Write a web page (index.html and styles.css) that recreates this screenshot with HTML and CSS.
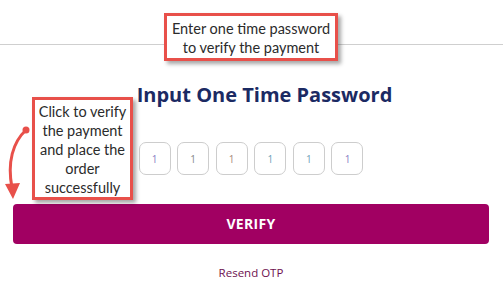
FILE: index.html
```html
<!DOCTYPE html>
<html lang="en">
<head>
    <meta charset="UTF-8">
    <meta name="viewport" content="width=device-width, initial-scale=1.0">
    <title>Verify Payment</title>
    <link rel="stylesheet" href="styles.css">
</head>
<body>
    <div class="page">
        <div class="divider"></div>
        <h2 class="title">Input One Time Password</h2>
        <div class="otp">
            <div class="digit d1">1</div>
            <div class="digit d2">1</div>
            <div class="digit d3">1</div>
            <div class="digit d4">1</div>
            <div class="digit d5">1</div>
            <div class="digit d6">1</div>
        </div>
        <a href="#" class="verify">VERIFY</a>
        <div class="resend"><a href="#">Resend OTP</a></div>

        <!-- annotations -->
        <div class="note note-top">Enter one time password<br>to verify the payment</div>
        <div class="note note-left">Click to verify<br>the payment<br>and place the<br>order<br>successfully</div>
        <svg class="arrow" width="40" height="84" viewBox="0 0 40 84">
            <circle cx="25" cy="10" r="3.5" fill="#e8504a"/>
            <path d="M25 10 C12 22 6 42 11 68" fill="none" stroke="#e8504a" stroke-width="3" stroke-linecap="round"/>
            <path d="M4 64 L12 79 L19 63 Z" fill="#e8504a"/>
        </svg>
    </div>
</body>
</html>
```

FILE: styles.css
```css
body {
    margin: 0;
    background: #fff;
    font-family: "Open Sans", sans-serif;
}
.page {
    position: relative;
    width: 503px;
    height: 296px;
    padding: 0 14px 0 13px;
    box-sizing: border-box;
    overflow: hidden;
}
.divider {
    height: 1px;
    background: #cfcfcf;
    margin: 44px -14px 0 -13px;
}
.title {
    margin: 37px 0 0;
    padding-left: 27px;
    text-align: center;
    font-size: 20px;
    line-height: 26px;
    font-weight: 700;
    color: #1b2a63;
}
.otp {
    display: flex;
    justify-content: center;
    gap: 6.6px;
    margin: 34px 0 0 0;
}
.digit {
    width: 30px;
    height: 31px;
    border: 1px solid #cdcdcd;
    border-radius: 7px;
    display: flex;
    align-items: center;
    justify-content: center;
    font-size: 10px;
    color: #888;
}
.d1, .d6 { color: #8a80c4; }
.d3 { color: #a88a7a; }
.d4, .d5 { color: #6f9fb8; }
.verify {
    display: block;
    margin-top: 29px;
    height: 40px;
    line-height: 40px;
    background: #a10062;
    border-radius: 4px;
    color: #fff;
    text-align: center;
    font-weight: 700;
    font-size: 14px;
    text-decoration: none;
    letter-spacing: 0.3px;
}
.resend {
    margin-top: 21px;
    text-align: center;
    font-size: 11.5px;
}
.resend a {
    color: #6e1150;
    text-decoration: none;
}
.note {
    position: absolute;
    background: #fff;
    border: 3px solid #e8504a;
    box-shadow: 3px 3px 4px rgba(0, 0, 0, 0.35);
    font-family: Lato, sans-serif;
    font-size: 14.5px;
    line-height: 19px;
    color: #2b2b2b;
    text-align: center;
    box-sizing: border-box;
}
.note-top {
    left: 164px;
    top: 13px;
    width: 174px;
    height: 48px;
    padding-top: 3px;
}
.note-left {
    left: 32px;
    top: 97px;
    width: 101px;
    height: 103px;
    padding-top: 2px;
}
.arrow {
    position: absolute;
    left: 1px;
    top: 120px;
}
```
